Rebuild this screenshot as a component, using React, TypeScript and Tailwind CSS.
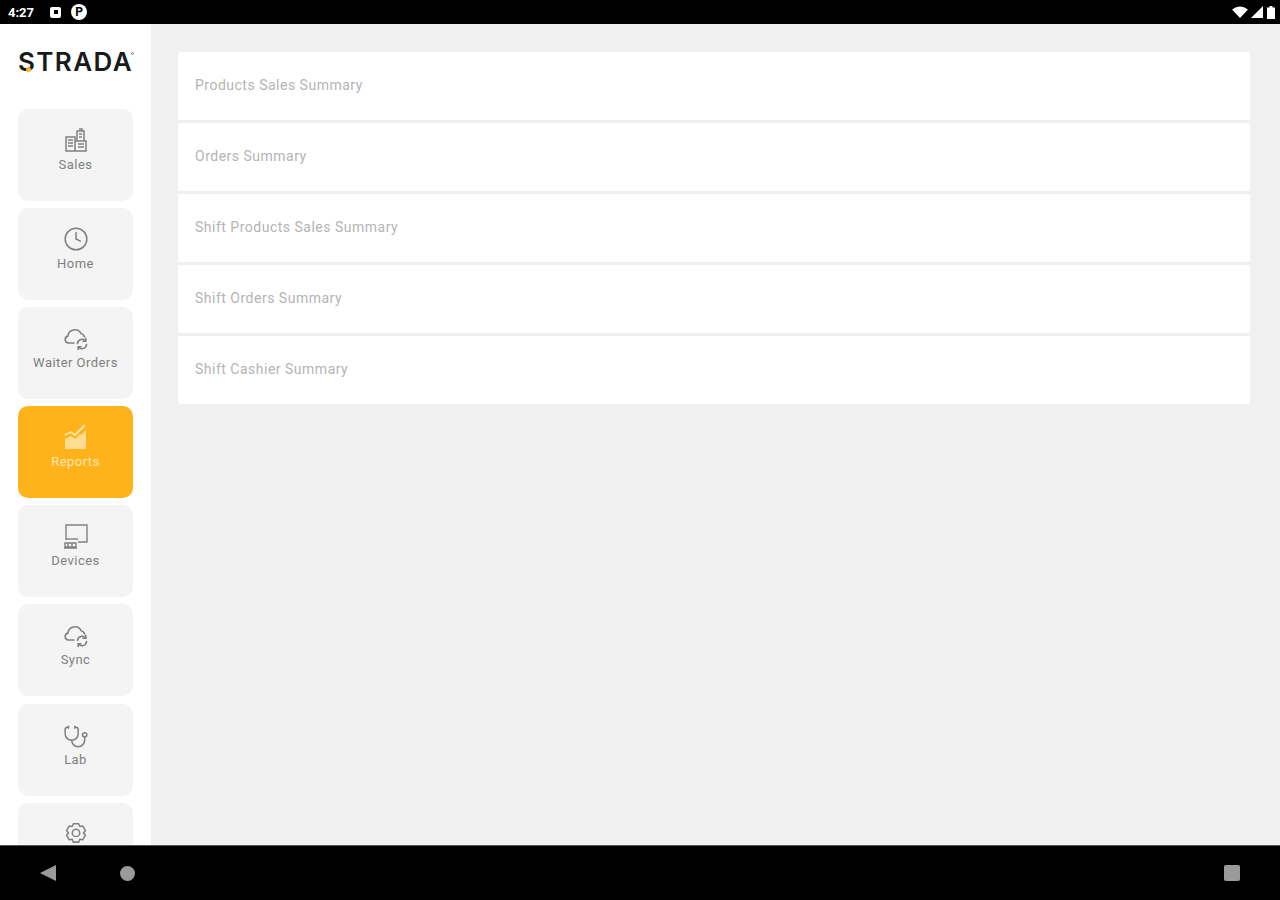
import { Clock, Stethoscope } from "lucide-react";
import type { ReactNode } from "react";

function SalesIcon() {
  return (
    <svg width="26" height="26" viewBox="0 0 26 26" fill="none" stroke="currentColor" strokeWidth="1.5">
      <path d="M3 24V10h9v14zM12 24V14h11v10z" />
      <path d="M14 14V4h7v10M16 2h3v2" />
      <path d="M5 13h5M5 16h5M5 19h5M15 17h6M15 20h6M16 7h3M16 10h3" />
    </svg>
  );
}

function CloudSyncIcon() {
  return (
    <svg width="26" height="26" viewBox="0 0 26 26" fill="none" stroke="currentColor" strokeWidth="1.6" strokeLinecap="round">
      <path d="M11 18H5.500a3.500 3.500 0 0 1-.6-6.900A7 7 0 0 1 18 8.500a5 5 0 0 1 3.600 3.500" />
      <path d="M14.500 18.500a4.500 4.500 0 0 1 8-2.500M23.500 19.500a4.500 4.500 0 0 1-8 2.500" />
      <path d="M22.800 13.500V16.200H20M15.200 24.500V21.800H18" />
    </svg>
  );
}

function ReportsIcon() {
  return (
    <svg width="24" height="26" viewBox="0 0 24 26" fill="currentColor" stroke="none">
      <path d="M1 25V15l6-3 4 3 5-5 1 1 5-5v19z" opacity="0.8" />
      <path d="M1 11l6-3 4 3L21 1" fill="none" stroke="currentColor" strokeWidth="1.8" />
    </svg>
  );
}

function DevicesIcon() {
  return (
    <svg width="26" height="26" viewBox="0 0 26 26" fill="none" stroke="currentColor" strokeWidth="1.4">
      <path d="M3 17V2h21v17h-9" />
      <path d="M3 16h12" />
      <path d="M2 20h11v4H2zM1 25h13M5 20v4M9 20v4" />
    </svg>
  );
}

function SettingsIcon() {
  return (
    <svg width="26" height="26" viewBox="0 0 24 24" fill="none" stroke="currentColor" strokeWidth="1.4" strokeLinejoin="round">
      <path d="M9.500 2.500h5l1 2.600 2.700-.5 2.500 4.300-1.800 2.100 1.800 2.100-2.500 4.300-2.700-.5-1 2.600h-5l-1-2.600-2.700.5-2.500-4.300L5.100 11 3.300 8.900l2.500-4.300 2.700.5z" />
      <circle cx="12" cy="11" r="3.400" />
    </svg>
  );
}

type NavItem = { id: string; label?: string; icon: ReactNode; active?: boolean };

// the last tile runs under the nav bar, its label isn't visible
const navItems: NavItem[] = [
  { id: "sales", label: "Sales", icon: <SalesIcon /> },
  { id: "home", label: "Home", icon: <Clock size={26} strokeWidth={1.4} /> },
  { id: "waiter", label: "Waiter Orders", icon: <CloudSyncIcon /> },
  { id: "reports", label: "Reports", icon: <ReportsIcon />, active: true },
  { id: "devices", label: "Devices", icon: <DevicesIcon /> },
  { id: "sync", label: "Sync", icon: <CloudSyncIcon /> },
  { id: "lab", label: "Lab", icon: <Stethoscope size={26} strokeWidth={1.4} className="translate-y-[2px]" /> },
  { id: "settings", icon: <SettingsIcon /> },
];

const reports = [
  "Products Sales Summary",
  "Orders Summary",
  "Shift Products Sales Summary",
  "Shift Orders Summary",
  "Shift Cashier Summary",
];

export default function App() {
  return (
    <div className="h-[900px] w-[1280px] flex flex-col overflow-hidden bg-[#f0f0f0] font-['Roboto',sans-serif]">
      {/* status bar */}
      <div className="h-6 shrink-0 bg-black flex items-center justify-between pl-2 pr-[5px] text-white">
        <div className="flex items-center">
          <span className="text-[13px] font-bold leading-none w-[28px]">4:27</span>
          <span className="ml-[14px] w-[11px] h-[11px] bg-white rounded-[2px] flex items-center justify-center">
            <span className="w-[4px] h-[4px] bg-black" />
          </span>
          <span className="ml-[10px] w-[16px] h-[16px] rounded-full bg-white text-black text-[12px] font-bold leading-none flex items-center justify-center">
            P
          </span>
        </div>
        <div className="flex items-center gap-[3px]">
          <svg width="16" height="12" viewBox="0 0 16 12" fill="white">
            <path d="M0 3.500Q8-2.500 16 3.500L8 12z" />
          </svg>
          <svg width="12" height="12" viewBox="0 0 12 12" fill="white">
            <path d="M0 12 12 0v12z" />
          </svg>
          <svg width="8" height="13" viewBox="0 0 8 13" fill="white" className="ml-[1px]">
            <path d="M2.500 0h3v1.500H8V13H0V1.500h2.500z" />
          </svg>
        </div>
      </div>

      <div className="flex-1 min-h-0 flex">
        {/* sidebar */}
        <aside className="w-[151px] shrink-0 bg-white overflow-hidden pt-[26px] px-[18px]">
          <div className="relative h-[24px] flex items-center justify-center text-[26px] leading-none font-semibold tracking-[1.4px] text-[#1a1a1a] font-['Inter',sans-serif]">
            STRADA
            <span className="absolute left-[8px] top-[17px] w-[5px] h-[5px] rounded-full bg-[#ffb31a]" />
            <span className="absolute right-[-1px] top-[2px] w-[3px] h-[3px] rounded-full border border-[#777777]" />
          </div>
          <nav className="mt-[35px] flex flex-col gap-[7.1px]">
            {navItems.map((item) => (
              <div
                key={item.id}
                className={`h-[92px] shrink-0 rounded-[10px] flex flex-col items-center pt-[18px] ${
                  item.active ? "bg-[#ffb31a] text-[#ffe6b3]" : "bg-[#f4f4f4] text-[#808080]"
                }`}
              >
                <div className="h-[26px] flex items-center justify-center">{item.icon}</div>
                {item.label && (
                  <span className="mt-[3px] text-[13px] leading-[18px] tracking-[0.45px]">{item.label}</span>
                )}
              </div>
            ))}
          </nav>
        </aside>

        {/* report list */}
        <main className="flex-1 pt-7 pl-[27px] pr-[30px]">
          <div className="flex flex-col gap-[3px]">
            {reports.map((name) => (
              <div key={name} className="h-[68px] bg-white rounded-[2px] flex items-center pl-[17px] pb-[2px]">
                <span className="text-[14px] tracking-[0.5px] text-[#b4b4b4]">{name}</span>
              </div>
            ))}
          </div>
        </main>
      </div>

      {/* android nav bar */}
      <div className="h-[55px] shrink-0 bg-black border-t border-[#555555] flex items-center justify-between px-[40px]">
        <div className="flex items-center">
          <svg width="16" height="16" viewBox="0 0 16 16" fill="#9a9a9a">
            <path d="M16 0v16L0 8z" />
          </svg>
          <span className="ml-[64px] w-[15px] h-[15px] rounded-full bg-[#9a9a9a]" />
        </div>
        <span className="w-[16px] h-[16px] rounded-[2px] bg-[#9a9a9a]" />
      </div>
    </div>
  );
}
